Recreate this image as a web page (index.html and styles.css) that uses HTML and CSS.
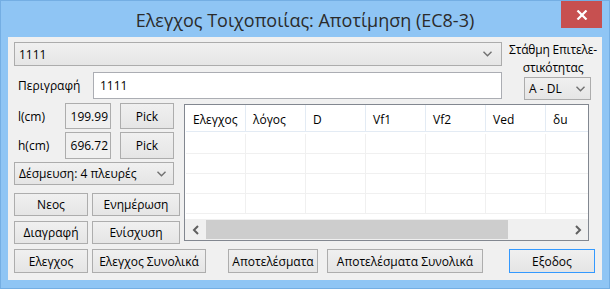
FILE: index.html
```html
<!DOCTYPE html>
<html lang="el">
<head>
<meta charset="utf-8">
<title>Ελεγχος Τοιχοποιίας</title>
<link rel="stylesheet" href="styles.css">
</head>
<body>
<div class="window">
  <div class="titlebar">
    <div class="title">Ελεγχος Τοιχοποιίας: Αποτίμηση (EC8-3)</div>
    <div class="close"><svg width="12" height="10" viewBox="0 0 12 10"><path d="M1.5 0.5 L10.5 9.5 M10.5 0.5 L1.5 9.5" stroke="#fff" stroke-width="2.2"/></svg></div>
  </div>
  <div class="client">
    <div class="top">
      <div class="top-left">
        <div class="combo combo-main"><span>1111</span><svg class="chev" width="9" height="6" viewBox="0 0 9 6"><path d="M0.5 0.8 L4.5 4.8 L8.5 0.8" fill="none" stroke="#707070" stroke-width="1.4"/></svg></div>
        <div class="desc-row">
          <span class="desc-label">Περιγραφή</span>
          <div class="input">1111</div>
        </div>
      </div>
      <div class="top-right">
        <div class="perf-label">Στάθμη Επιτελε-<br>στικότητας</div>
        <div class="combo combo-perf"><span>A - DL</span><svg class="chev" width="9" height="6" viewBox="0 0 9 6"><path d="M0.5 0.8 L4.5 4.8 L8.5 0.8" fill="none" stroke="#707070" stroke-width="1.4"/></svg></div>
      </div>
    </div>
    <div class="middle">
      <div class="left-col">
        <div class="dim-row">
          <span class="dim-label">l(cm)</span>
          <div class="num-box">199.99</div>
          <button class="btn btn-pick">Pick</button>
        </div>
        <div class="dim-row dim-row-h">
          <span class="dim-label">h(cm)</span>
          <div class="num-box">696.72</div>
          <button class="btn btn-pick">Pick</button>
        </div>
        <div class="combo combo-bind"><span>Δέσμευση: 4 πλευρές</span><svg class="chev" width="9" height="6" viewBox="0 0 9 6"><path d="M0.5 0.8 L4.5 4.8 L8.5 0.8" fill="none" stroke="#707070" stroke-width="1.4"/></svg></div>
        <div class="btn-grid">
          <button class="btn">Νεος</button>
          <button class="btn">Ενημέρωση</button>
          <button class="btn">Διαγραφή</button>
          <button class="btn">Ενίσχυση</button>
        </div>
      </div>
      <div class="grid">
        <div class="grid-body">
          <div class="grid-row grid-head">
            <div class="cell">Ελεγχος</div><div class="cell">λόγος</div><div class="cell">D</div><div class="cell">Vf1</div><div class="cell">Vf2</div><div class="cell">Ved</div><div class="cell">δu</div>
          </div>
          <div class="grid-row"><div class="cell"></div><div class="cell"></div><div class="cell"></div><div class="cell"></div><div class="cell"></div><div class="cell"></div><div class="cell"></div></div>
          <div class="grid-row"><div class="cell"></div><div class="cell"></div><div class="cell"></div><div class="cell"></div><div class="cell"></div><div class="cell"></div><div class="cell"></div></div>
          <div class="grid-row"><div class="cell"></div><div class="cell"></div><div class="cell"></div><div class="cell"></div><div class="cell"></div><div class="cell"></div><div class="cell"></div></div>
          <div class="grid-row"><div class="cell"></div><div class="cell"></div><div class="cell"></div><div class="cell"></div><div class="cell"></div><div class="cell"></div><div class="cell"></div></div>
        </div>
        <div class="hscroll">
          <div class="sb-arrow"><svg width="8" height="10" viewBox="0 0 8 10"><path d="M6 1 L2 5 L6 9" fill="none" stroke="#606060" stroke-width="2"/></svg></div>
          <div class="sb-track"><div class="sb-thumb"></div></div>
          <div class="sb-arrow"><svg width="8" height="10" viewBox="0 0 8 10"><path d="M2 1 L6 5 L2 9" fill="none" stroke="#606060" stroke-width="2"/></svg></div>
        </div>
      </div>
    </div>
    <div class="bottom">
      <button class="btn b-check">Ελεγχος</button>
      <button class="btn b-checkall">Ελεγχος Συνολικά</button>
      <button class="btn b-res">Αποτελέσματα</button>
      <button class="btn b-resall">Αποτελέσματα Συνολικά</button>
      <button class="btn b-exit">Εξοδος</button>
    </div>
  </div>
</div>
</body>
</html>
```
FILE: styles.css
```css
* { box-sizing: border-box; }
html, body { margin: 0; padding: 0; }
body {
  width: 610px;
  height: 289px;
  overflow: hidden;
  font-family: "Open Sans", "Noto Sans", sans-serif;
  font-size: 12px;
  color: #000;
}
.window {
  width: 610px;
  height: 289px;
  background: #8fc5f4;
  border: 1px solid #74aee3;
  display: flex;
  flex-direction: column;
  position: relative;
}
.titlebar {
  height: 36px;
  display: flex;
  align-items: center;
  justify-content: center;
}
.title {
  font-size: 18px;
  color: #2b2b2b;
  margin-top: 1px;
}
.close {
  position: absolute;
  top: 0;
  right: 7px;
  width: 41px;
  height: 27px;
  background: #c75050;
  display: flex;
  align-items: center;
  justify-content: center;
}
.client {
  flex: 1;
  margin: 0 7px 8px 7px;
  background: #f0f0f0;
  padding: 5px 0 0 6px;
  display: flex;
  flex-direction: column;
}
.top { display: flex; }
.top-left {
  width: 488px;
  display: flex;
  flex-direction: column;
  gap: 6px;
}
.combo {
  display: flex;
  align-items: center;
  justify-content: space-between;
  border: 1px solid #acacac;
  background: linear-gradient(#f0f0f0, #e5e5e5);
  padding: 0 9px 0 4px;
  white-space: nowrap;
}
.combo-main { height: 24px; }
.chev { flex: none; }
.desc-row {
  display: flex;
  align-items: center;
  height: 27px;
}
.desc-label { width: 79px; padding-left: 4px; }
.input {
  flex: 1;
  height: 27px;
  background: #fff;
  border: 1px solid #abadb3;
  padding: 0 0 0 6px;
  display: flex;
  align-items: center;
}
.top-right {
  flex: 1;
  display: flex;
  flex-direction: column;
  margin-top: -1px;
}
.perf-label {
  text-align: center;
  line-height: 18px;
  padding-left: 2px;
  white-space: nowrap;
  letter-spacing: -0.2px;
}
.combo-perf {
  width: 67px;
  height: 23px;
  margin-left: 22px;
  padding: 0 5px 0 4px;
}
.middle {
  display: flex;
  margin-top: 3px;
}
.left-col {
  width: 166px;
  display: flex;
  flex-direction: column;
}
.dim-row {
  display: flex;
  align-items: center;
  height: 26px;
}
.dim-row-h { margin-top: 3px; height: 27px; }
.dim-label { width: 51px; padding-left: 4px; }
.num-box {
  width: 46px;
  height: 100%;
  border: 1px solid #adadad;
  background: #f0f0f0;
  display: flex;
  align-items: center;
  justify-content: flex-end;
  padding-right: 2px;
}
.btn {
  font: inherit;
  color: #000;
  border: 1px solid #adadad;
  background: linear-gradient(#f0f0f0, #e5e5e5);
  height: 23px;
  padding: 0;
  white-space: nowrap;
}
.btn-pick {
  width: 54px;
  height: 100%;
  margin-left: 9px;
}
.combo-bind {
  width: 160px;
  height: 23px;
  margin-top: 3px;
  padding-right: 7px;
}
.btn-grid {
  display: grid;
  grid-template-columns: 74px 88px;
  gap: 5px 4px;
  margin-top: 8px;
}
.grid {
  width: 405px;
  height: 137px;
  margin-left: 4px;
  margin-top: 1px;
  border: 1px solid #828790;
  background: #fff;
  display: flex;
  flex-direction: column;
  overflow: hidden;
}
.grid-body {
  flex: 1;
  overflow: hidden;
  padding-left: 1px;
}
.grid-row {
  display: flex;
  height: 20px;
  border-bottom: 1px solid #f0f0f0;
}
.grid-head {
  height: 27px;
  border-bottom: 1px solid #e3ebf4;
  margin-bottom: 2px;
}
.cell {
  flex: none;
  width: 60px;
  border-right: 1px solid #f0f0f0;
  padding-left: 7px;
  display: flex;
  align-items: center;
}
.grid-head .cell { border-right-color: #e3ebf4; padding-top: 2px; }
.hscroll {
  height: 21px;
  display: flex;
  background: #f0f0f0;
  flex: none;
}
.sb-arrow {
  width: 21px;
  display: flex;
  align-items: center;
  justify-content: center;
}
.sb-track { flex: 1; display: flex; padding: 1px 0; }
.sb-thumb { width: 302px; background: #cdcdcd; }
.bottom {
  display: flex;
  margin-top: 5px;
}
.bottom .btn { height: 24px; }
.b-check { width: 74px; }
.b-checkall { width: 114px; margin-left: 4px; }
.b-res { width: 90px; margin-left: 22px; }
.b-resall { width: 156px; margin-left: 9px; }
.b-exit { width: 86px; margin-left: 26px; border-color: #3399ff; }
```
